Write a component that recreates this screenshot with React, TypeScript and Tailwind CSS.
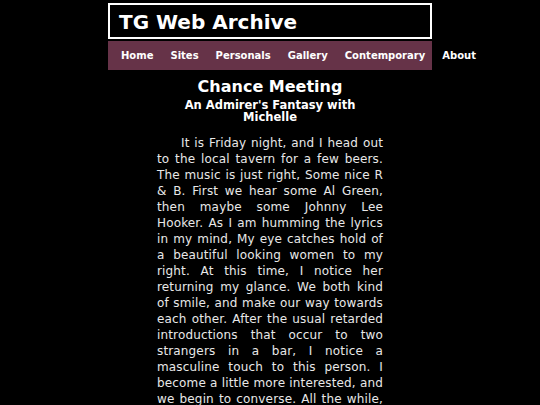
import React from "react";

const navItems = ["Home", "Sites", "Personals", "Gallery", "Contemporary", "About"];

const story =
  "It is Friday night, and I head out to the local tavern for a few beers. The music is just right, Some nice R & B. First we hear some Al Green, then maybe some Johnny Lee Hooker. As I am humming the lyrics in my mind, My eye catches hold of a beautiful looking women to my right. At this time, I notice her returning my glance. We both kind of smile, and make our way towards each other. After the usual retarded introductions that occur to two strangers in a bar, I notice a masculine touch to this person. I become a little more interested, and we begin to converse. All the while, I find myself drawn to her. She tells me her name is Michelle, and that she comes here every Friday.";

const App = () => {
  return (
    <div className="min-h-screen bg-black text-white" style={{ fontFamily: '"DejaVu Sans", Verdana, sans-serif' }}>
      <div className="mx-auto w-[324px] pt-[3px]">
        <header className="flex h-[36px] items-center border-2 border-white bg-black pl-[9px] pt-[2px]">
          <h1 className="text-[20px] font-bold leading-none">TG Web Archive</h1>
        </header>

        <nav className="mt-[2px] flex h-[29px] items-center gap-[17px] whitespace-nowrap bg-[#663348] pl-[13px] text-[10px] font-bold">
          {navItems.map((item) => (
            <a key={item} href="#" className="text-white">
              {item}
            </a>
          ))}
        </nav>
      </div>

      <main className="mx-auto w-[226px] pt-[7px]">
        <h2 className="text-center text-[16px] font-bold leading-[20px]">Chance Meeting</h2>
        <h3 className="mt-[2px] text-center text-[11.5px] font-bold leading-[12px]">
          An Admirer's Fantasy with Michelle
        </h3>
        <p className="mt-[12px] indent-[24px] text-justify text-[12px] leading-[16px] tracking-[0.15px] text-[#e8e8e8]">
          {story}
        </p>
      </main>
    </div>
  );
};

export default App;
